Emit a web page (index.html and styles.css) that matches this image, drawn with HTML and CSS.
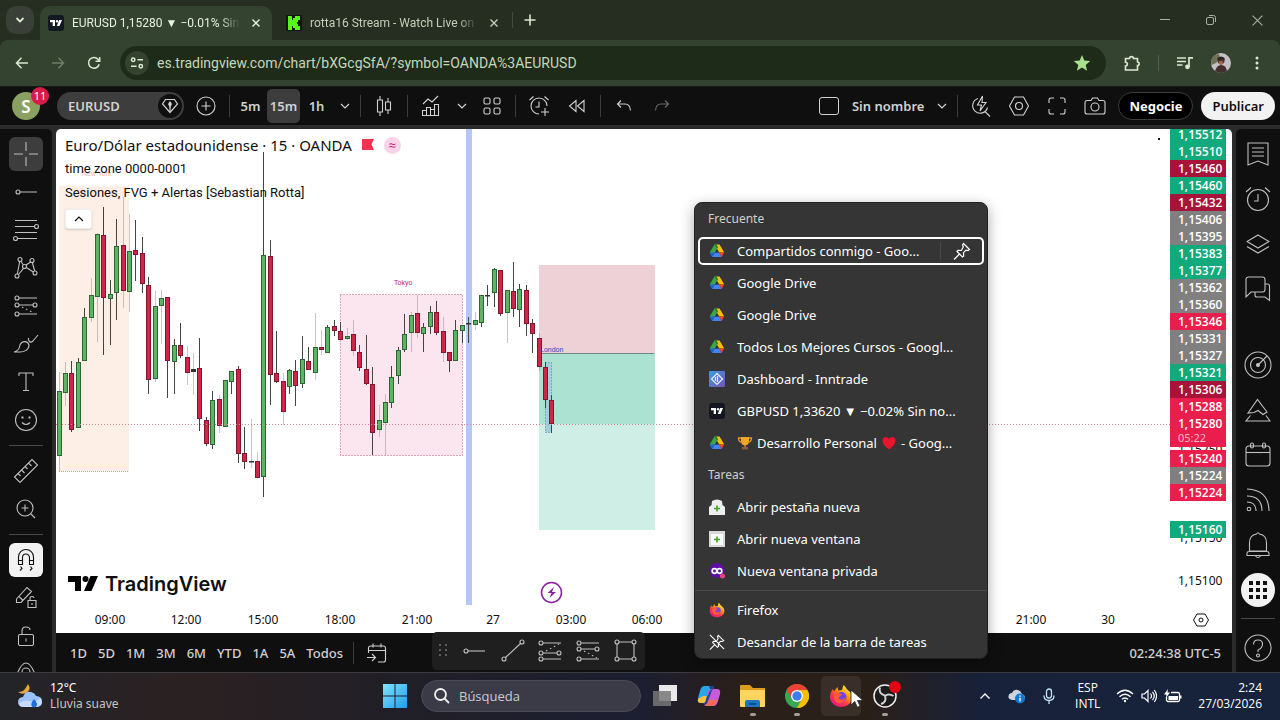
FILE: index.html
```html
<!DOCTYPE html>
<html lang="es">
<head>
    <meta charset="UTF-8">
    <meta name="viewport" content="width=device-width, initial-scale=1.0">
    <title>EURUSD 1,15280 ▼ −0.01% Sin nombre</title>
    <link rel="stylesheet" href="styles.css">
</head>
<body>
    <!-- Shared icons -->
    <svg class="sprite" aria-hidden="true">
        <symbol id="drive" viewBox="0 0 16 16">
            <path d="M5.4 1.5h5.2L8 6z" fill="#188038"/>
            <path d="M5.4 1.5L0.8 9.6 3.3 14 8 6z" fill="#34a853"/>
            <path d="M10.6 1.5L15.2 9.6H10L8 6 5.6 1.8z" fill="#fbbc04"/>
            <path d="M5.4 1.5h2L9 4.3 8 6z" fill="#188038"/>
            <path d="M0.8 9.6H6L3.3 14z" fill="#1967d2"/>
            <path d="M6 9.6h4L12.7 14H3.3z" fill="#4285f4"/>
            <path d="M10 9.6h5.2L12.7 14z" fill="#ea4335"/>
            <path d="M8 6l2 3.6H6z" fill="#353535"/>
        </symbol>
        <symbol id="tv" viewBox="0 0 16 16">
            <rect width="16" height="16" rx="3" fill="#131722"/>
            <path d="M2 5h5v6H4.7V7.3H2zM11.2 5H14l-2.5 6H8.8z" fill="#fff"/>
            <circle cx="9" cy="6.2" r="1.2" fill="#fff"/>
        </symbol>
        <symbol id="firefox" viewBox="0 0 24 24">
            <defs>
                <linearGradient id="ffBody" x1="0.85" y1="0.1" x2="0.2" y2="0.95">
                    <stop offset="0" stop-color="#fff44f"/>
                    <stop offset="0.35" stop-color="#ff980e"/>
                    <stop offset="0.65" stop-color="#ff3647"/>
                    <stop offset="1" stop-color="#e31587"/>
                </linearGradient>
            </defs>
            <path d="M4 5l1 2.5L8.5 3l.8 3.5L13 6l1.5-5c2 1.5 2.5 3.5 4 4.8C21.5 8 23 10.5 23 13.5 23 19 18 23 12 23S1 18.5 1 13c0-3 1-6 3-8z" fill="url(#ffBody)"/>
            <circle cx="12.5" cy="13" r="5" fill="#7543e3"/>
            <path d="M5 10c3-2 5-1 8 .5-1 2-3 1.5-3.5 3.5 1.5 2.5 5 2 7-1-.5 5-4 7-7.5 6S4.5 14 5 10z" fill="#ff5a36"/>
        </symbol>
        <symbol id="chevron" viewBox="0 0 12 12"><path d="M2 4l4 4 4-4" fill="none" stroke="currentColor" stroke-width="1.2"/></symbol>
        <symbol id="close" viewBox="0 0 10 10"><path d="M1.5 1.5l7 7M8.5 1.5l-7 7" fill="none" stroke="currentColor" stroke-width="1.4"/></symbol>
    </svg>

    <header class="browser">
        <div class="tab-strip">
            <button class="tab-search" aria-label="Buscar pestañas"><svg width="12" height="12" viewBox="0 0 12 12"><path d="M2.5 4L6 7.5 9.5 4" fill="none" stroke="currentColor" stroke-width="1.8"/></svg></button>
            <div class="tab tab-active">
                <svg width="16" height="16"><use href="#tv"/></svg>
                <span class="tab-title">EURUSD 1,15280 ▼ −0.01% Sin</span>
                <button class="tab-close" aria-label="Cerrar"><svg width="10" height="10"><use href="#close"/></svg></button>
            </div>
            <div class="tab tab-wide">
                <svg width="16" height="16" viewBox="0 0 16 16"><rect width="16" height="16" fill="#0a1a06"/><path d="M2 1h4v4h1V3h2V1h5v4h-2v2h-1v2h1v2h2v4H9v-2H7v-2H6v4H2z" fill="#53fc18"/></svg>
                <span class="tab-title">rotta16 Stream - Watch Live on</span>
                <button class="tab-close" aria-label="Cerrar"><svg width="10" height="10"><use href="#close"/></svg></button>
            </div>
            <span class="tab-line"></span>
            <button class="new-tab" aria-label="Nueva pestaña"><svg width="14" height="14" viewBox="0 0 14 14"><path d="M7 1.5v11M1.5 7h11" stroke="currentColor" stroke-width="1.6"/></svg></button>
            <div class="window-controls">
                <button aria-label="Minimizar"><svg width="10" height="10" viewBox="0 0 10 10"><path d="M0 4.5h10" stroke="currentColor"/></svg></button>
                <button aria-label="Restaurar"><svg width="10" height="10" viewBox="0 0 10 10"><rect x=".5" y="2.5" width="7" height="7" rx="1.5" fill="none" stroke="currentColor"/><path d="M3 .5h4.5a2 2 0 0 1 2 2V7" fill="none" stroke="currentColor"/></svg></button>
                <button aria-label="Cerrar ventana"><svg width="11" height="11" viewBox="0 0 10 10"><path d="M.5.5l9 9M9.5.5l-9 9" stroke="currentColor"/></svg></button>
            </div>
        </div>

        <div class="nav-bar">
            <button class="nav-btn" aria-label="Atrás"><svg width="14" height="14" viewBox="0 0 14 14"><path d="M13 7H1.5M6.5 1.8L1.5 7l5 5.2" fill="none" stroke="currentColor" stroke-width="1.5"/></svg></button>
            <button class="nav-btn nav-off" aria-label="Adelante"><svg width="14" height="14" viewBox="0 0 14 14"><path d="M1 7h11.5M7.5 1.8l5 5.2-5 5.2" fill="none" stroke="currentColor" stroke-width="1.5"/></svg></button>
            <button class="nav-btn" aria-label="Recargar"><svg width="14" height="14" viewBox="0 0 14 14"><path d="M12.2 8.2A5.4 5.4 0 1 1 11 3.2L12.5 5M12.7 1v4.2H8.5" fill="none" stroke="currentColor" stroke-width="1.5"/></svg></button>
            <div class="url-bar">
                <button class="site-info" aria-label="Información del sitio"><svg width="14" height="14" viewBox="0 0 14 14"><g fill="none" stroke="currentColor" stroke-width="1.5"><circle cx="3.2" cy="3.8" r="1.7"/><path d="M7.5 3.8H13M1 10.2h5.5"/><circle cx="10.8" cy="10.2" r="1.7"/></g></svg></button>
                <input class="url" type="text" aria-label="Dirección" value="es.tradingview.com/chart/bXGcgSfA/?symbol=OANDA%3AEURUSD">
                <svg width="18" height="18" viewBox="0 0 18 18"><path d="M9 1l2.3 5.5 5.9.5-4.5 3.9 1.4 5.8L9 13.6l-5.1 3.1 1.4-5.8L.8 7l5.9-.5z" fill="#a9e08f"/></svg>
            </div>
            <button class="nav-btn" aria-label="Extensiones"><svg width="18" height="18" viewBox="0 0 18 18"><path d="M2.5 4.5H6.5C6.5 2 10.5 2 10.5 4.5H14.5V8c2.2 0 2.2 3.5 0 3.5V16H2.5V12c2.5 0 2.5-3.8 0-3.8z" fill="none" stroke="currentColor" stroke-width="1.6"/></svg></button>
            <span class="nav-line"></span>
            <button class="nav-btn" aria-label="Contenido multimedia"><svg width="16" height="14" viewBox="0 0 16 14"><path d="M0 2h9M0 5.5h9M0 9h5.5M12 10.5V1.8h4" fill="none" stroke="currentColor" stroke-width="1.7"/><circle cx="10.5" cy="10.8" r="2.4" fill="currentColor"/></svg></button>
            <button class="nav-btn" aria-label="Perfil"><svg width="20" height="20" viewBox="0 0 20 20"><circle cx="10" cy="10" r="10" fill="#c5bfc6"/><path d="M1 5q3-4 7-4l1 4-4 5-4.5 2Q-.5 8 1 5z" fill="#6e7256"/><circle cx="10" cy="7.5" r="3.6" fill="#54352e"/><path d="M6.5 5q3.5-3 7 0v2h-7z" fill="#2b2524"/><path d="M4 18q2-6 6-6 5 0 6 6-6 4-12 0z" fill="#41302c"/><circle cx="10" cy="10" r="2" fill="#a66b56"/></svg></button>
            <button class="nav-btn" aria-label="Menú"><svg width="4" height="16" viewBox="0 0 4 16" fill="currentColor"><circle cx="2" cy="3" r="1.5"/><circle cx="2" cy="8" r="1.5"/><circle cx="2" cy="13" r="1.5"/></svg></button>
        </div>
    </header>

    <div class="topbar">
        <button class="account">S<span class="badge">11</span></button>
        <div class="symbol">
            <button class="symbol-name">EURUSD</button>
            <button class="symbol-gem" aria-label="Liquidez"><svg width="18" height="18" viewBox="0 0 18 18" fill="none" stroke="currentColor" stroke-width="1.2"><path d="M4.5 2.5h9L16.5 7 9 15.5 1.5 7z"/><path d="M9 4l2 3-2 4-2-4z" fill="currentColor" stroke="none"/><path d="M9 9v6"/></svg></button>
        </div>
        <button class="tool" aria-label="Comparar"><svg width="20" height="20" viewBox="0 0 20 20" class="line"><circle cx="10" cy="10" r="9"/><path d="M10 5.5v9M5.5 10h9"/></svg></button>
        <span class="divider"></span>
        <button class="interval">5m</button>
        <button class="interval interval-on">15m</button>
        <button class="interval">1h</button>
        <button class="more" aria-label="Más intervalos"><svg width="12" height="12"><use href="#chevron"/></svg></button>
        <span class="divider"></span>
        <button class="tool" aria-label="Velas"><svg width="18" height="22" viewBox="0 0 18 22" class="line"><path d="M5 1v4M5 17v4M2.5 5h5v12h-5zM13 3v4M13 15v4M10.5 7h5v8h-5z"/></svg></button>
        <span class="divider"></span>
        <button class="tool" aria-label="Indicadores"><svg width="20" height="22" viewBox="0 0 20 22" class="line"><path d="M2 9l5-5 4 3 6-6M1.5 20.5v-5h4v5zM5.5 20.5v-8h4v8M9.5 20.5v-6h4v6M13.5 20.5v-11h4v11h-12"/></svg></button>
        <button class="more" aria-label="Favoritos"><svg width="12" height="12"><use href="#chevron"/></svg></button>
        <button class="tool" aria-label="Plantillas"><svg width="18" height="18" viewBox="0 0 18 18" class="line"><rect x="1" y="1" width="6" height="6" rx="1.5"/><rect x="11" y="1" width="6" height="6" rx="1.5"/><rect x="1" y="11" width="6" height="6" rx="1.5"/><rect x="11" y="11" width="6" height="6" rx="1.5"/></svg></button>
        <span class="divider"></span>
        <button class="tool" aria-label="Crear alerta"><svg width="22" height="22" viewBox="0 0 22 22" class="line"><path d="M19 11a8 8 0 1 0-8 8M11 6.5V12H7.5M1.5 5l4-3.5M16.5 1.5l4 3.5M17 13v8M13 17h8"/></svg></button>
        <button class="tool" aria-label="Repetición"><svg width="18" height="14" viewBox="0 0 18 14" class="line"><path d="M8 1.5v11L1.5 7zM16 1.5v11L9.5 7z"/></svg></button>
        <span class="divider"></span>
        <button class="tool" aria-label="Deshacer"><svg width="16" height="14" viewBox="0 0 16 14" class="line"><path d="M5 1.5L1.5 5 5 8.5M1.5 5H9q5 0 5.5 6.5"/></svg></button>
        <button class="tool tool-off" aria-label="Rehacer"><svg width="16" height="14" viewBox="0 0 16 14" class="line"><path d="M11 1.5L14.5 5 11 8.5M14.5 5H7q-5 0-5.5 6.5"/></svg></button>
        <div class="topbar-right">
            <label class="layout-name"><input type="checkbox"> Sin nombre</label>
            <button class="more" aria-label="Gestionar diseños"><svg width="12" height="12"><use href="#chevron"/></svg></button>
            <span class="divider"></span>
            <button class="tool" aria-label="Búsqueda rápida"><svg width="22" height="22" viewBox="0 0 22 22" class="line"><path d="M8 3.5a7.5 7.5 0 1 0 9.5 9M15 16.5l5 5M12.5 1L7.5 10h4l-1.5 6 6-8.5h-4z"/></svg></button>
            <button class="tool" aria-label="Ajustes"><svg width="22" height="20" viewBox="0 0 22 20" class="line"><path d="M6.5 1h9l5 9-5 9h-9l-5-9z"/><circle cx="11" cy="10" r="3.5"/></svg></button>
            <button class="tool" aria-label="Pantalla completa"><svg width="18" height="18" viewBox="0 0 18 18" class="line"><path d="M1 6V3a2 2 0 0 1 2-2h3M12 1h3a2 2 0 0 1 2 2v3M17 12v3a2 2 0 0 1-2 2h-3M6 17H3a2 2 0 0 1-2-2v-3"/></svg></button>
            <button class="tool" aria-label="Captura"><svg width="22" height="18" viewBox="0 0 22 18" class="line"><path d="M3 3.5h4L8.5 1h5L15 3.5h4a2 2 0 0 1 2 2V15a2 2 0 0 1-2 2H3a2 2 0 0 1-2-2V5.5a2 2 0 0 1 2-2z"/><circle cx="11" cy="10" r="4"/></svg></button>
            <button class="pill pill-dark">Negocie</button>
            <button class="pill">Publicar</button>
        </div>
    </div>

    <div class="workspace">
        <nav class="rail rail-left">
            <button class="rail-btn rail-hover" aria-label="Cruz"><svg width="24" height="24" viewBox="0 0 24 24" class="line"><path d="M12 0v9M12 15v9M0 12h9M15 12h9"/></svg></button>
            <button class="rail-btn" aria-label="Rayo horizontal"><svg width="22" height="6" viewBox="0 0 22 6" class="line"><circle cx="3" cy="3" r="2"/><path d="M5 3h17"/></svg></button>
            <button class="rail-btn" aria-label="Fibonacci"><svg width="26" height="24" viewBox="0 0 26 24" class="line"><path d="M2 2.5h22M2 8.5h19.5M2 14.5h22M4.5 20.5H24"/><circle cx="23.5" cy="8.5" r="2"/><circle cx="2.5" cy="20.5" r="2"/></svg></button>
            <button class="rail-btn" aria-label="Patrones"><svg width="24" height="24" viewBox="0 0 24 24" class="line"><circle cx="6" cy="3.5" r="2"/><circle cx="18" cy="4.5" r="2"/><circle cx="10.5" cy="10.5" r="2"/><circle cx="3" cy="20" r="2"/><circle cx="21" cy="17" r="2"/><path d="M5.7 5.5L3.3 18M6.8 5.3L9.5 9M12 9l4.7-3M18.3 6.5l2.4 8.5M9.5 12.3L4.5 18.5M12.3 11.5l7 4.5"/></svg></button>
            <button class="rail-btn" aria-label="Previsión"><svg width="24" height="22" viewBox="0 0 24 22" class="line"><circle cx="3" cy="3" r="2"/><circle cx="3" cy="10" r="2"/><circle cx="21" cy="10" r="2"/><circle cx="3" cy="19" r="2"/><path d="M5 3h18M5 10h14M5 19h18"/><path d="M8 12l12 6" stroke-dasharray="1.5 3"/></svg></button>
            <button class="rail-btn" aria-label="Pincel"><svg width="26" height="20" viewBox="0 0 26 20" class="line"><path d="M1 18q5-1 6-7c2-5 8-4 9 0 0 5-5 7-9 7zM25 1l-5 6q-2 2-3.5.5T15.5 4"/></svg></button>
            <button class="rail-btn" aria-label="Texto"><svg width="16" height="20" viewBox="0 0 16 20" class="line"><path d="M1 4V1h14v3M8 1v17M5 18.5h6"/></svg></button>
            <button class="rail-btn" aria-label="Iconos"><svg width="24" height="24" viewBox="0 0 24 24" class="line"><circle cx="12" cy="12" r="10.5"/><path d="M8 14.5q4 4 8 0"/><path d="M8.5 8.5v2M15.5 8.5v2" stroke-width="2"/></svg></button>
            <span class="rail-line"></span>
            <button class="rail-btn" aria-label="Medir"><svg width="26" height="26" viewBox="0 0 26 26" class="line"><path d="M1.5 19L19 1.5l5.5 5.5L7 24.5zM5 15.5l2.5 2.5M8.5 12l3 3M12 8.5l2.5 2.5M15.5 5l3 3"/></svg></button>
            <button class="rail-btn" aria-label="Zoom"><svg width="20" height="20" viewBox="0 0 20 20" class="line"><circle cx="9" cy="9" r="8"/><path d="M15 15l4 4M9 5.5v7M5.5 9h7"/></svg></button>
            <span class="rail-line"></span>
            <button class="rail-btn rail-on" aria-label="Imán"><svg width="18" height="24" viewBox="0 0 18 24" class="line"><path d="M1.5 16.5V9a7.5 7.5 0 0 1 15 0v7.5h-4V9.5a3.5 3.5 0 0 0-7 0v7zM1.5 12.5h4M12.5 12.5h4M3.5 18.5l1.5 2-2 2M13.5 18.5l1.5 2-2 2"/></svg></button>
            <button class="rail-btn" aria-label="Seguir dibujando"><svg width="22" height="24" viewBox="0 0 22 24" class="line"><path d="M1.5 13L12 1.5l4.5 4L6 16.5H1.5zM4 10.5l4 4M13 14.5h8v7h-8zM15 14.5v-2q0-2 2-2t2 1.5M17 17v2"/></svg></button>
            <button class="rail-btn" aria-label="Bloquear"><svg width="18" height="20" viewBox="0 0 18 20" class="line"><rect x="1.5" y="8.5" width="15" height="11" rx="1.5"/><path d="M5 8.5V5q0-4 4-4t4 3M9 12.5v3"/></svg></button>
            <button class="rail-btn" aria-label="Ocultar"><svg width="20" height="24" viewBox="0 0 20 24" class="line"><path d="M1 12q9-22 18 0-9 22-18 0z"/><circle cx="10" cy="10" r="4"/></svg></button>
        </nav>

        <main class="center">
            <section class="chart">
                <svg class="plot" id="plot" role="img" aria-label="Gráfico de velas EURUSD 15 minutos"></svg>
                <svg class="scale" id="scale" role="img" aria-label="Escala de precios"></svg>
                <div class="legend">
                    <div class="legend-title">Euro/Dólar estadounidense · 15 · OANDA
                        <svg width="12" height="12" viewBox="0 0 12 12"><path d="M0 0h12L9.5 5.5 12 11H0z" fill="#f7334f"/></svg>
                        <span class="approx">≈</span>
                    </div>
                    <div class="legend-study">time zone 0000-0001</div>
                    <div class="legend-study">Sesiones, FVG + Alertas [Sebastian Rotta]</div>
                    <button class="collapse" aria-label="Contraer"><svg width="10" height="10" viewBox="0 0 10 10"><path d="M1 7l4-4 4 4" fill="none" stroke="currentColor" stroke-width="1.2"/></svg></button>
                </div>
                <a class="brand" href="#">
                    <svg width="30" height="16" viewBox="0 0 30 16"><path d="M0 0h13v15H7V6H0zM22.5 0H30l-6.5 15H16z"/><circle cx="17.5" cy="3" r="3"/></svg>
                    <span>TradingView</span>
                </a>
            </section>

            <footer class="ranges">
                <button>1D</button>
                <button>5D</button>
                <button>1M</button>
                <button>3M</button>
                <button>6M</button>
                <button>YTD</button>
                <button>1A</button>
                <button>5A</button>
                <button>Todos</button>
                <span class="divider"></span>
                <button class="goto" aria-label="Ir a"><svg width="20" height="20" viewBox="0 0 20 20" class="line"><path d="M1.5 10V5a2 2 0 0 1 2-2h13a2 2 0 0 1 2 2v12a2 2 0 0 1-2 2H11M1.5 7.5h17M6 .5v4M14 .5v4M0 14.5h8M5 11l3.5 3.5L5 18"/></svg></button>
                <span class="clock">02:24:38 UTC-5</span>
            </footer>

            <div class="favorites">
                <svg width="10" height="14" viewBox="0 0 10 14" fill="#5d5d5d"><path d="M0 0h2v2H0zM6 0h2v2H6zM0 5h2v2H0zM6 5h2v2H6zM0 10h2v2H0zM6 10h2v2H6z"/></svg>
                <button aria-label="Rayo horizontal"><svg width="24" height="24" viewBox="0 0 24 24" class="line"><circle cx="3" cy="12" r="2"/><path d="M5 12h17"/></svg></button>
                <button aria-label="Línea de tendencia"><svg width="24" height="24" viewBox="0 0 24 24" class="line"><circle cx="3" cy="20" r="2"/><circle cx="21" cy="3" r="2"/><path d="M4.5 18.5l15-14"/></svg></button>
                <button aria-label="Posición larga"><svg width="24" height="24" viewBox="0 0 24 24" class="line"><circle cx="3" cy="4" r="2"/><circle cx="3" cy="14" r="2"/><circle cx="21" cy="14" r="2"/><circle cx="3" cy="20" r="2"/><path d="M5 4h18M5 14h14M5 20h18"/><path d="M8 12l13-7" stroke-dasharray="1.5 3"/></svg></button>
                <button aria-label="Posición corta"><svg width="24" height="24" viewBox="0 0 24 24" class="line"><circle cx="3" cy="4" r="2"/><circle cx="3" cy="10" r="2"/><circle cx="21" cy="10" r="2"/><circle cx="3" cy="20" r="2"/><path d="M5 4h18M5 10h14M5 20h18"/><path d="M8 12l13 7" stroke-dasharray="1.5 3"/></svg></button>
                <button aria-label="Rectángulo"><svg width="24" height="24" viewBox="0 0 24 24" class="line"><circle cx="3" cy="3" r="2"/><circle cx="20" cy="3" r="2"/><circle cx="3" cy="20" r="2"/><circle cx="20" cy="20" r="2"/><path d="M5 3h13M5 20h13M3 5v13M20 5v13"/></svg></button>
            </div>
        </main>

        <nav class="rail rail-right">
            <button class="side-btn" aria-label="Lista"><svg width="22" height="24" viewBox="0 0 22 24" class="line"><path d="M1 1h20v22l-10-4-10 4zM5 6h12M5 10h12M5 14h12"/></svg></button>
            <button class="side-btn" aria-label="Alertas"><svg width="26" height="26" viewBox="0 0 26 26" class="line"><circle cx="13" cy="14" r="10.5"/><path d="M13 8v7H9M1 6l5-4.5M20 1.5L25 6"/></svg></button>
            <button class="side-btn" aria-label="Capas"><svg width="24" height="20" viewBox="0 0 24 20" class="line"><path d="M12 1l11 6.5L12 14 1 7.5zM1 12.5L12 19l11-6.5"/></svg></button>
            <button class="side-btn" aria-label="Chats"><svg width="26" height="26" viewBox="0 0 26 26" class="line"><path d="M1 21V3.5a2.5 2.5 0 0 1 2.5-2.5h14A2.5 2.5 0 0 1 20 3.5v10a2.5 2.5 0 0 1-2.5 2.5H6zM20 8h2.5a2 2 0 0 1 2 2v14.5L20 21h-8a2 2 0 0 1-2-2v-3"/></svg></button>
            <span class="side-space"></span>
            <button class="side-btn" aria-label="Screener"><svg width="28" height="28" viewBox="0 0 28 28" class="line"><circle cx="14" cy="14" r="13"/><circle cx="14" cy="14" r="7.5"/><circle cx="14" cy="14" r="1.5" fill="currentColor"/><path d="M14 14l9-9"/></svg></button>
            <button class="side-btn" aria-label="Pine"><svg width="26" height="24" viewBox="0 0 26 24" class="line"><path d="M3 15L12.5 1.5 22 14l-4 2.5-5-4-4 2zM5.5 17.5L1 23h24l-4-5.5"/></svg></button>
            <button class="side-btn" aria-label="Calendario"><svg width="26" height="26" viewBox="0 0 26 26" class="line"><rect x="1" y="4" width="24" height="20" rx="3"/><path d="M1 10.5h24"/><rect x="5.5" y="1" width="3" height="5" rx="1.5"/><rect x="17.5" y="1" width="3" height="5" rx="1.5"/></svg></button>
            <button class="side-btn" aria-label="Noticias"><svg width="24" height="24" viewBox="0 0 24 24" class="line"><circle cx="3" cy="21" r="1.8"/><path d="M1 14q9 0 9 9M1 8q15 0 15 15M1 1q22 1 22 22"/></svg></button>
            <button class="side-btn" aria-label="Notificaciones"><svg width="24" height="28" viewBox="0 0 24 28" class="line"><path d="M3.5 20v-8q0-8 7-9 1.5-2.5 3 0 7 1 7 9v8zM3 20.5h18q2.5 0 2 4H1q-.5-4 2-4M9.5 25q2.5 3 5 0"/></svg></button>
            <button class="side-btn" aria-label="Productos"><svg width="34" height="34" viewBox="0 0 34 34"><circle cx="17" cy="17" r="17" fill="#f2f2f2"/><path d="M8 8h4v4H8zM15 8h4v4h-4zM22 8h4v4h-4zM8 15h4v4H8zM15 15h4v4h-4zM22 15h4v4h-4zM8 22h4v4H8zM15 22h4v4h-4zM22 22h4v4h-4z" fill="#111"/></svg></button>
            <span class="rail-line"></span>
            <button class="side-btn" aria-label="Ayuda"><svg width="28" height="28" viewBox="0 0 28 28" class="line"><circle cx="14" cy="14" r="13"/><path d="M9.5 10.5q0-4.5 4.5-4.5t4.5 4-4.5 6V18"/><circle cx="14" cy="21.5" r="1.5"/></svg></button>
        </nav>
    </div>

    <!-- Jump list opened over the Firefox button -->
    <div class="jump-list">
        <h2>Frecuente</h2>
        <button class="jump-item jump-focus">
            <svg width="16" height="16"><use href="#drive"/></svg><span>Compartidos conmigo - Goo...</span>
            <svg width="18" height="18" viewBox="0 0 18 18" fill="none" stroke="currentColor" stroke-width="1.2"><path d="M10.5 1.5l6 6-1.5 1-2-.3-2.5 2.5.2 3.3-1.2 1L4 9.5l1-1.2 3.3.2L10.3 5l-.8-2zM6.5 12L1 17.5"/></svg>
        </button>
        <button class="jump-item"><svg width="16" height="16"><use href="#drive"/></svg><span>Google Drive</span></button>
        <button class="jump-item"><svg width="16" height="16"><use href="#drive"/></svg><span>Google Drive</span></button>
        <button class="jump-item"><svg width="16" height="16"><use href="#drive"/></svg><span>Todos Los Mejores Cursos - Googl...</span></button>
        <button class="jump-item">
            <svg width="16" height="16" viewBox="0 0 16 16"><defs><linearGradient id="inn" x2="1" y2="1"><stop offset="0" stop-color="#3a9be0"/><stop offset="1" stop-color="#7454b8"/></linearGradient></defs><rect width="16" height="16" rx="1" fill="url(#inn)"/><path d="M8 2.5L13.5 8 8 13.5 2.5 8zM6.5 6v4M8.5 5v6" fill="none" stroke="#e4f2ff" stroke-width="1.2"/></svg>
            <span>Dashboard - Inntrade</span>
        </button>
        <button class="jump-item"><svg width="16" height="16"><use href="#tv"/></svg><span>GBPUSD 1,33620 ▼ −0.02% Sin no...</span></button>
        <button class="jump-item">
            <svg width="16" height="16"><use href="#drive"/></svg>
            <span class="jump-rich">
                <svg width="16" height="14" viewBox="0 0 16 14"><path d="M4 1h8v4q0 4-4 4.5Q4 9 4 5z" fill="#f5a623"/><path d="M4 2H1.5q0 4 3.5 4M12 2h2.5q0 4-3.5 4M8 9v2" fill="none" stroke="#e2952b" stroke-width="1.3"/><path d="M5 11h6v2.5H5z" fill="#8a5a34"/></svg>
                Desarrollo Personal
                <svg width="16" height="14" viewBox="1 0 16 14"><path d="M9 13.5Q2.5 9 2.5 4.5 2.5 1 5.8 1 8 1 9 3q1-2 3.2-2 3.3 0 3.3 3.5Q15.5 9 9 13.5z" fill="#e8152c"/></svg>
                - Goog...
            </span>
        </button>
        <h2>Tareas</h2>
        <button class="jump-item"><svg width="16" height="16" viewBox="0 0 16 16"><path d="M3 2q5-3 10 0l.5 4L16 8v8H0V8l2.5-2z" fill="#eee"/><path d="M8 6.5v6M5 9.5h6" stroke="#42a32c" stroke-width="1.6"/></svg><span>Abrir pestaña nueva</span></button>
        <button class="jump-item"><svg width="16" height="16" viewBox="0 0 16 16"><path d="M0 0h16v16H0z" fill="#d9d9d9"/><path d="M2 3h12v11H2z" fill="#f8f8f8"/><path d="M8 5.5v6M5 8.5h6" stroke="#42a32c" stroke-width="1.6"/></svg><span>Abrir nueva ventana</span></button>
        <button class="jump-item"><svg width="16" height="16" viewBox="0 0 16 16"><circle cx="8" cy="7.5" r="7.5" fill="#5b0fa8"/><circle cx="5.5" cy="8" r="2.3" fill="none" stroke="#fff" stroke-width="1.7"/><circle cx="10.5" cy="8" r="2.3" fill="none" stroke="#fff" stroke-width="1.7"/><circle cx="13.5" cy="13" r="2.5" fill="#e3457c"/></svg><span>Nueva ventana privada</span></button>
        <hr>
        <button class="jump-item"><svg width="16" height="16"><use href="#firefox"/></svg><span>Firefox</span></button>
        <button class="jump-item"><svg width="16" height="18" viewBox="0 0 18 18" fill="none" stroke="currentColor" stroke-width="1.2"><path d="M10.5 1.5l6 6-1.5 1-2-.3-2.5 2.5.2 3.3-1.2 1L4 9.5l1-1.2 3.3.2L10.3 5l-.8-2zM6.5 12L1 17.5M1 1l16 16"/></svg><span>Desanclar de la barra de tareas</span></button>
    </div>

    <div class="taskbar">
        <button class="weather">
            <svg width="28" height="26" viewBox="0 0 28 26"><path d="M12 1q4 6-2 9-4 2-8-1 5 0 7-3 1.5-2 3-5z" fill="#e9a83a"/><path d="M7 24q-5-.5-5-5t5-5q2-6 8-5 4 1 5 4 6 0 6 6 0 4.5-5 5z" fill="#9cc0fb"/><path d="M3 21q3-4 10-3t12-3q3 7-4 9H7q-3 0-4-3z" fill="#c5dbff"/><path d="M18 16q-5 6-1 8.5 4 0 4-3.5-.5-3-3-5z" fill="#1b6fe0"/></svg>
            <span class="stack"><span>12°C</span><span class="dim">Lluvia suave</span></span>
        </button>
        <div class="apps">
            <button class="app" aria-label="Inicio"><svg width="24" height="24" viewBox="0 0 24 24"><defs><linearGradient id="win" x2="1" y2="1"><stop offset="0" stop-color="#7fe3fb"/><stop offset="1" stop-color="#1f9df0"/></linearGradient></defs><path d="M0 0h11.5v11.5H0zM12.5 0H24v11.5H12.5zM0 12.5h11.5V24H0zM12.5 12.5H24V24H12.5z" fill="url(#win)"/></svg></button>
            <div class="search">
                <svg width="16" height="16" viewBox="0 0 16 16" fill="none" stroke="#f0f0f0" stroke-width="1.8"><circle cx="6.5" cy="6.5" r="5.5"/><path d="M10.5 10.5l4.5 4.5"/></svg>
                <input type="search" placeholder="Búsqueda" aria-label="Búsqueda">
            </div>
            <button class="app" aria-label="Vista de tareas"><svg width="26" height="22" viewBox="0 0 26 22"><path d="M7 0h18v16H7z" fill="#e9e9e9"/><path d="M1 6h18v15H1z" fill="#777" fill-opacity=".85"/></svg></button>
            <button class="app" aria-label="Copilot"><svg width="24" height="24" viewBox="0 0 24 24"><path d="M8 2h7q2 0 1 3l-3 11q-1 3-4 3H4q-4 0-3-5l2-7q1-5 5-5z" fill="#2aa6e8"/><path d="M4 13q4-2 7 0l-2 6H4q-4 0-3-4z" fill="#f2c640"/><path d="M16 22H9q-2 0-1-3l3-11q1-3 4-3h5q4 0 3 5l-2 7q-1 5-5 5z" fill="#c85bdc"/><path d="M9 17q6-2 11-1-1 6-5 6H9q-2 0-1-3z" fill="#f46a5c"/><path d="M13 7q1-2 3-2h-3l-1-3h3q2 0 2 3-2 0-3 4l-3 8q-1 4-4 4l-1-2q3 0 3-4z" fill="#2c3f8c"/></svg></button>
            <button class="app app-run" aria-label="Explorador"><svg width="26" height="24" viewBox="0 0 26 24"><path d="M0 2q0-1 1-1h9l3 3h12v6H0z" fill="#dc9d1c"/><path d="M0 6h25v16q0 1-1 1H1q-1 0-1-1z" fill="#ffd560"/><path d="M5 23v-5q0-2 2-2h11q2 0 2 2v5z" fill="#1c76bd"/><path d="M9 20h7" stroke="#0d4d85" stroke-width="2"/></svg></button>
            <button class="app app-run" aria-label="Chrome"><svg width="24" height="24" viewBox="0 0 24 24"><circle cx="12" cy="12" r="12" fill="#34a853"/><path d="M1.6 6A12 12 0 0 1 22.4 6H12L7 15z" fill="#ea4335"/><path d="M22.4 6A12 12 0 0 1 12 24l5-9q2-5-3-9z" fill="#fbbc04"/><circle cx="12" cy="12" r="6" fill="#fff"/><circle cx="12" cy="12" r="4.7" fill="#3b7ded"/></svg></button>
            <button class="app app-hover" aria-label="Firefox"><svg width="24" height="24"><use href="#firefox"/></svg><svg class="cursor" width="14" height="20" viewBox="0 0 14 20"><path d="M1 1v15l3.8-3.5 2.5 5.7 2.7-1.2-2.5-5.5H13z" fill="#fff" stroke="#222" stroke-width=".8"/></svg></button>
            <button class="app app-run" aria-label="OBS"><svg width="24" height="24" viewBox="0 0 24 24"><circle cx="12" cy="12" r="11" fill="#1c1b1c" stroke="#eee" stroke-width="1.5"/><g fill="none" stroke="#d0d0d0" stroke-width="2"><path d="M7 3.5q-2 6 5 8"/><path d="M20.5 12q-5-3-8.5 0"/><path d="M8 20q6-2 4-8"/></g></svg><span class="rec"></span></button>
        </div>
        <div class="tray">
            <button class="tray-btn" aria-label="Iconos ocultos"><svg width="12" height="12" viewBox="0 0 12 12"><path d="M1.5 8.5L6 4l4.5 4.5" fill="none" stroke="#fff" stroke-width="1.4"/></svg></button>
            <button class="tray-btn" aria-label="OneDrive"><svg width="18" height="16" viewBox="0 0 18 16"><path d="M4 12q-4-1-3.5-4T4 5q2-4 6-3 3 1 4 4 3 1 3 4l-3 2z" fill="#ccd4de"/><circle cx="12" cy="10.5" r="5" fill="#1277cf"/><path d="M12 7.5v1.3M12 9.8v3.7" stroke="#fff" stroke-width="1.4"/></svg></button>
            <button class="tray-btn" aria-label="Micrófono"><svg width="12" height="16" viewBox="0 0 12 16" fill="none" stroke="#bfe3f2" stroke-width="1.3"><rect x="3.5" y="1" width="5" height="9" rx="2.5"/><path d="M1 7.5q0 5 5 5t5-5M6 12.5V16"/></svg></button>
            <span class="stack stack-mid"><span>ESP</span><span>INTL</span></span>
            <button class="status" aria-label="Red, sonido y batería">
                <svg width="18" height="14" viewBox="0 0 18 14" fill="none" stroke="#fff" stroke-width="1.4"><path d="M1 5q8-7.5 16 0M3.5 7.8q5.5-5 11 0M6 10.3q3-2.6 6 0"/><circle cx="9" cy="12" r="1.2" fill="#fff" stroke="none"/></svg>
                <svg width="16" height="14" viewBox="0 0 16 14" fill="none" stroke="#fff" stroke-width="1.2"><path d="M1 5h2.5L7 1.5v11L3.5 9H1zM9.5 4.5q2 2.5 0 5M11.5 2.8q3.5 4.2 0 8.4M13.3 1q4.5 6 0 12"/></svg>
                <svg width="18" height="14" viewBox="0 0 18 14"><path d="M7 3.5h7a1.5 1.5 0 0 1 1.5 1.5v6a1.5 1.5 0 0 1-1.5 1.5H4A1.5 1.5 0 0 1 2.5 11V8" fill="none" stroke="#fff" stroke-width="1.3"/><path d="M4.5 7H14v4H4.5zM16 6.5h1.5v3H16zM4 0L0 5.5h2.5L2 9l4-5.5H3.5z" fill="#fff"/></svg>
            </button>
            <button class="stack stack-end"><span>2:24</span><span>27/03/2026</span></button>
        </div>
    </div>

    <script src="chart.js"></script>
</body>
</html>
```

FILE: styles.css
```css
* {
    box-sizing: border-box;
}
body {
    margin: 0;
    height: 100vh;
    display: flex;
    flex-direction: column;
    overflow: hidden;
    background-color: #2b2b2b;
    color: #d1d1d1;
    font-family: "Noto Sans", "Open Sans", sans-serif;
    font-size: 13px;
}
button, input {
    font: inherit;
    color: inherit;
    background: none;
    border: none;
    padding: 0;
    margin: 0;
    outline: none;
}
button {
    display: flex;
    align-items: center;
    justify-content: center;
    cursor: pointer;
    white-space: nowrap;
}
svg {
    display: block;
    flex-shrink: 0;
}
.sprite {
    position: absolute;
    width: 0;
    height: 0;
}
.line {
    fill: none;
    stroke: currentColor;
    stroke-width: 1.1;
}

/* Browser */
.browser {
    background-color: #252e20;
    color: #dce8d2;
    border-bottom: 1px solid #171a16;
    font-family: Roboto, "Open Sans", sans-serif;
}
.tab-strip {
    display: flex;
    align-items: center;
    height: 40px;
    padding-left: 6px;
}
.tab-search {
    width: 28px;
    height: 28px;
    margin-right: 6px;
    border-radius: 10px;
    background-color: #3a4037;
}
.tab {
    display: flex;
    align-items: center;
    gap: 8px;
    width: 232px;
    height: 34px;
    padding: 0 8px;
    align-self: flex-end;
    border-radius: 10px 10px 0 0;
    color: #c3ceb9;
}
.tab-wide {
    width: 238px;
    padding-left: 14px;
}
.tab-active {
    background-color: #34432f;
    color: #e6f0de;
}
.tab-title {
    flex: 1;
    overflow: hidden;
    white-space: nowrap;
    font-size: 12px;
    mask-image: linear-gradient(90deg, #000 88%, transparent);
}
.tab-close {
    width: 16px;
    height: 16px;
}
.tab-line {
    width: 1px;
    height: 16px;
    margin: 0 3px 0 2px;
    background-color: #414a3c;
}
.new-tab {
    width: 28px;
    height: 28px;
}
.window-controls {
    display: flex;
    margin-left: auto;
    color: #a9b0a4;
}
.window-controls button {
    width: 46px;
    height: 40px;
}
.nav-bar {
    display: flex;
    align-items: center;
    height: 46px;
    padding: 0 5px 0 4px;
    background-color: #34432f;
    border-radius: 8px 8px 0 0;
}
.nav-btn {
    width: 36px;
    height: 34px;
}
.nav-off {
    color: #6f7d68;
}
.nav-line {
    width: 1px;
    height: 16px;
    margin: 0 8px;
    background-color: #53624d;
}
.url-bar {
    display: flex;
    align-items: center;
    flex: 1;
    height: 34px;
    margin: 0 8px;
    padding: 0 15px 0 5px;
    border-radius: 17px;
    background-color: #1d2b18;
}
.site-info {
    width: 24px;
    height: 24px;
    border-radius: 50%;
    background-color: #34432f;
}
.url {
    flex: 1;
    min-width: 0;
    padding: 0 8px;
    font-size: 14px;
    color: #c6d6bb;
}

/* Top toolbar */
.topbar {
    display: flex;
    align-items: center;
    height: 38px;
    padding: 0 5px 0 12px;
    margin-bottom: 4px;
    background-color: #0f0f0f;
    font-weight: 600;
}
.account {
    position: relative;
    width: 28px;
    height: 28px;
    margin-right: 17px;
    border-radius: 50%;
    background-color: #8aa162;
    color: #fff;
    font-size: 17px;
}
.badge {
    position: absolute;
    top: -5px;
    right: -9px;
    width: 18px;
    height: 18px;
    border-radius: 50%;
    background-color: #d81c48;
    font-size: 11px;
    font-weight: 400;
    line-height: 18px;
}
.symbol {
    display: flex;
    align-items: center;
    justify-content: space-between;
    width: 127px;
    height: 28px;
    margin-right: 3px;
    padding: 0 2px 0 11px;
    border-radius: 14px;
    background-color: #3d3d3d;
}
.symbol-gem {
    width: 24px;
    height: 24px;
    border-radius: 50%;
    background-color: #0f0f0f;
}
.tool {
    width: 38px;
    height: 34px;
}
.tool-off {
    color: #6a6a6a;
}
.more {
    width: 23px;
    height: 34px;
}
.interval {
    width: 33px;
    height: 34px;
    border-radius: 5px;
}
.interval-on {
    background-color: #3d3d3d;
}
.divider {
    width: 1px;
    height: 22px;
    margin: 0 4px;
    background-color: #3d3d3d;
}
.topbar-right {
    display: flex;
    align-items: center;
    margin-left: auto;
}
.layout-name {
    display: flex;
    align-items: center;
    gap: 13px;
    margin-right: 6px;
}
.layout-name input {
    appearance: none;
    width: 20px;
    height: 18px;
    border: 1px solid #d1d1d1;
    border-radius: 3px;
}
.pill {
    height: 28px;
    margin-left: 8px;
    padding: 0 11px;
    border-radius: 14px;
    background-color: #f2f2f2;
    color: #0f0f0f;
}
.pill-dark {
    margin-left: 4px;
    padding: 0 10px;
    border: 1px solid #3d3d3d;
    background-color: #000;
    color: #fff;
    font-weight: 700;
}

/* Workspace */
.workspace {
    display: flex;
    gap: 4px;
    flex: 1;
    min-height: 0;
}
.rail {
    display: flex;
    flex-direction: column;
    align-items: center;
    overflow: hidden;
    background-color: #0f0f0f;
    color: #c0c0c0;
}
.rail-left {
    width: 52px;
    padding-top: 6px;
    border-radius: 0 5px 0 0;
}
.rail-btn {
    width: 34px;
    height: 34px;
    margin: 2px 0;
    border-radius: 6px;
    flex-shrink: 0;
}
.rail-hover {
    background-color: #3d3d3d;
}
.rail-on {
    background-color: #f2f2f2;
    color: #0f0f0f;
}
.rail-line {
    width: 34px;
    height: 1px;
    margin: 6px 0;
    flex-shrink: 0;
    background-color: #4a4a4a;
}
.rail-right {
    width: 44px;
    padding-top: 2px;
    border-radius: 5px 0 0 0;
}
.side-btn {
    width: 44px;
    height: 45px;
    flex-shrink: 0;
}
.side-space {
    height: 31px;
    flex-shrink: 0;
}
.center {
    position: relative;
    display: flex;
    flex-direction: column;
    flex: 1;
    min-width: 0;
}
.chart {
    position: relative;
    display: flex;
    flex: 1;
    min-height: 0;
    overflow: hidden;
    border-radius: 5px 5px 0 0;
    background-color: #fff;
    color: #0f0f0f;
}
.plot {
    flex: 1;
    min-width: 0;
    height: 100%;
}
.scale {
    width: 62px;
    height: 100%;
}
.legend {
    position: absolute;
    top: 4px;
    left: 9px;
}
.legend-title {
    display: flex;
    align-items: center;
    gap: 10px;
    height: 24px;
    font-size: 15px;
    white-space: nowrap;
}
.legend-study {
    height: 24px;
    font-family: Roboto, "Open Sans", sans-serif;
    font-size: 13px;
    line-height: 24px;
    white-space: nowrap;
}
.approx {
    width: 17px;
    height: 17px;
    border-radius: 50%;
    background-color: #fbd3e8;
    color: #c2187a;
    font-size: 13px;
    line-height: 17px;
    text-align: center;
}
.collapse {
    width: 27px;
    height: 20px;
    margin-top: 4px;
    border: 1px solid #eee;
    border-radius: 3px;
    background-color: #fff;
    box-shadow: 0 1px 2px rgba(0, 0, 0, 0.15);
    color: #0f0f0f;
}
.brand {
    position: absolute;
    left: 12px;
    bottom: 35px;
    display: flex;
    align-items: center;
    gap: 7px;
    color: #0f0f0f;
    font-family: Inter, sans-serif;
    font-size: 20px;
    font-weight: 600;
    line-height: 28px;
    text-decoration: none;
}
.axis-text {
    font-size: 12px;
    text-anchor: middle;
    fill: #0f0f0f;
}
.price-text {
    font-size: 12px;
    fill: #0f0f0f;
}
.price-tag {
    font-family: "Open Sans", "Noto Sans", sans-serif;
    font-size: 12px;
    font-weight: 600;
    fill: #fff;
}
.countdown {
    font-size: 11px;
    fill: #f8b8c5;
}
.session-name {
    font-family: "Liberation Sans", Arial, sans-serif;
    font-size: 7px;
}
.ranges {
    display: flex;
    align-items: center;
    gap: 1px;
    height: 39px;
    padding: 0 11px 0 9px;
    background-color: #0f0f0f;
    font-size: 13px;
    font-weight: 500;
}
.ranges button {
    height: 28px;
    padding: 0 5px;
}
.ranges .goto {
    width: 36px;
}
.clock {
    margin-left: auto;
    white-space: nowrap;
}
.favorites {
    position: absolute;
    left: 376px;
    bottom: 2px;
    display: flex;
    align-items: center;
    width: 213px;
    height: 38px;
    padding-left: 7px;
    border-radius: 5px;
    background-color: #1f1f1f;
    color: #c0c0c0;
}
.favorites > svg {
    margin-right: 7px;
}
.favorites button {
    width: 38px;
    height: 34px;
}

/* Jump list */
.jump-list {
    position: absolute;
    left: 694px;
    bottom: 61px;
    display: flex;
    flex-direction: column;
    width: 294px;
    padding: 0 3px;
    border: 1px solid #222;
    border-radius: 8px;
    background-color: #353535;
    box-shadow: 0 4px 14px rgba(0, 0, 0, 0.35);
    color: #fff;
    font-size: 13px;
}
.jump-list h2 {
    margin: 0;
    height: 32px;
    padding-left: 10px;
    color: #d0d0d0;
    font-size: 12px;
    font-weight: 400;
    line-height: 32px;
}
.jump-list hr {
    width: 292px;
    margin: 3px -3px;
    border: none;
    border-top: 1px solid #4a4a4a;
}
.jump-item {
    justify-content: flex-start;
    gap: 12px;
    height: 28px;
    margin: 2px 0;
    padding: 0 11px 0 9px;
    border: 2px solid transparent;
    border-radius: 5px;
}
.jump-focus {
    border-color: #fff;
}
.jump-focus > span {
    flex: 1;
    border-right: 1px solid #484848;
    text-align: left;
}
.jump-rich {
    display: flex;
    align-items: center;
    gap: 4px;
}

/* Taskbar */
.taskbar {
    display: grid;
    grid-template-columns: 1fr auto 1fr;
    align-items: center;
    height: 48px;
    padding-bottom: 1px;
    border-top: 1px solid #3c3c40;
    background: linear-gradient(90deg, #232428 0, #2b2122 15%, #211f26 30%, #1c1e31 50%, #2a1f19 58%, #291f19 68%, #17213a 77%, #17223b 100%);
    color: #fff;
    font-size: 12px;
}
.weather {
    gap: 6px;
    justify-self: start;
    padding-left: 16px;
}
.stack {
    display: flex;
    flex-direction: column;
    align-items: flex-start;
    line-height: 16px;
}
.stack-mid {
    align-items: center;
}
.stack-end {
    align-items: flex-end;
}
.dim {
    color: #c4c4c4;
}
.apps {
    display: flex;
    align-items: center;
    gap: 4px;
}
.app {
    position: relative;
    width: 40px;
    height: 40px;
    border-radius: 5px;
}
.app-hover {
    background-color: #3a2e28;
}
.app-run::after {
    content: "";
    position: absolute;
    left: 17px;
    bottom: 0;
    width: 6px;
    height: 3px;
    border-radius: 2px;
    background-color: #a59d96;
}
.search {
    display: flex;
    align-items: center;
    gap: 9px;
    width: 220px;
    height: 32px;
    padding: 0 12px;
    margin-left: 2px;
    border: 1px solid #4b4b57;
    border-radius: 16px;
    background-color: #3b3a47;
}
.search input {
    width: 150px;
    font-family: "Open Sans", "Noto Sans", sans-serif;
    font-size: 13px;
}
.search input::placeholder {
    color: #cbcbd2;
}
.cursor {
    position: absolute;
    left: 29px;
    top: 13px;
}
.rec {
    position: absolute;
    top: 5px;
    right: 4px;
    width: 12px;
    height: 12px;
    border-radius: 50%;
    background-color: #e30613;
}
.tray {
    display: flex;
    align-items: center;
    justify-self: end;
    padding-right: 18px;
    font-family: "Open Sans", "Noto Sans", sans-serif;
}
.tray-btn {
    width: 32px;
    height: 40px;
}
.stack-mid {
    margin: 0 16px 0 10px;
}
.status {
    gap: 7px;
    margin-right: 16px;
}
```

FILE: chart.js
```js
const NS = 'http://www.w3.org/2000/svg';
const plot = document.getElementById('plot');
const scale = document.getElementById('scale');

function add(parent, tag, attrs, text) {
    const el = document.createElementNS(NS, tag);
    for (const key in attrs) el.setAttribute(key, attrs[key]);
    if (text) el.textContent = text;
    parent.appendChild(el);
}

// high, body top, body bottom, low, colour (g up, r down, k flat), 1 for a thin wick
const candles = [
    [243, 262, 327, 342, 'g', 1], [233, 244, 264, 277, 'g', 1], [232, 244, 301, 303, 'r'],
    [229, 233, 299, 299, 'g'], [179, 188, 232, 232, 'g'], [149, 166, 189, 193, 'g', 1],
    [104, 105, 168, 213, 'g', 1], [78, 106, 169, 226, 'r'], [151, 165, 170, 216, 'g'],
    [90, 117, 164, 191, 'g'], [68, 116, 162, 179, 'r', 1], [85, 122, 163, 183, 'g', 1],
    [91, 121, 126, 152, 'r'], [108, 124, 155, 164, 'r'], [148, 156, 251, 265, 'r'],
    [162, 177, 250, 253, 'g', 1], [161, 169, 177, 215, 'g', 1], [168, 168, 232, 269, 'r'],
    [210, 216, 233, 265, 'g'], [194, 216, 227, 229, 'r'], [217, 228, 244, 256, 'r', 1],
    [224, 240, 243, 266, 'k', 1], [209, 239, 290, 302, 'r'], [288, 291, 315, 317, 'r'],
    [262, 271, 316, 320, 'g'], [266, 270, 297, 304, 'r', 1], [251, 251, 298, 298, 'g'],
    [242, 242, 253, 265, 'g'], [237, 240, 325, 334, 'r'], [298, 324, 333, 340, 'r'],
    [290, 332, 333, 339, 'k', 1], [323, 332, 349, 349, 'r', 1], [23, 126, 348, 368, 'g'],
    [111, 127, 246, 276, 'r'], [202, 244, 253, 254, 'r'], [244, 252, 283, 296, 'r', 1],
    [240, 241, 258, 265, 'g'], [231, 242, 257, 277, 'r'], [207, 230, 255, 259, 'g'],
    [218, 232, 241, 241, 'r'], [184, 218, 244, 251, 'g', 1], [201, 218, 221, 226, 'r', 1],
    [196, 198, 224, 224, 'g'], [191, 197, 202, 207, 'r'], [193, 202, 211, 211, 'r'],
    [199, 207, 210, 211, 'g', 1], [191, 205, 222, 227, 'r', 1], [216, 223, 239, 242, 'r'],
    [206, 240, 255, 256, 'r'], [238, 255, 304, 326, 'r'], [276, 291, 301, 308, 'g', 1],
    [265, 273, 294, 326, 'g', 1], [237, 248, 274, 279, 'g'], [218, 221, 247, 255, 'g'],
    [185, 205, 221, 223, 'g'], [183, 186, 204, 223, 'g', 1], [166, 184, 204, 209, 'r', 1],
    [194, 198, 205, 223, 'g'], [177, 183, 198, 205, 'g'], [172, 183, 204, 206, 'r'],
    [188, 202, 224, 233, 'r', 1], [223, 223, 232, 243, 'r'], [191, 201, 232, 232, 'g'],
    [196, 196, 202, 214, 'g'], [188, 194, 195, 214, 'k'], [183, 191, 196, 201, 'g', 1],
    [166, 166, 194, 198, 'g'], [156, 166, 167, 177, 'k'], [139, 140, 164, 178, 'g'],
    [141, 141, 185, 187, 'r'], [161, 161, 184, 214, 'g', 1], [133, 162, 180, 188, 'r'],
    [155, 160, 181, 198, 'g'], [156, 161, 195, 207, 'r'], [190, 194, 205, 224, 'r'],
    [204, 209, 238, 242, 'r', 1], [233, 238, 271, 279, 'r'], [266, 271, 295, 304, 'r']
];
const fills = { g: '#5db563', r: '#cf2648', k: '#333' };
const borders = { g: '#2c6632', r: '#84142f', k: '#333' };

// Sessions and drawings
add(plot, 'text', { x: 26, y: 47, class: 'session-name', fill: '#f3b9a4' }, 'New York');
add(plot, 'rect', { x: 3, y: 57, width: 70, height: 285, fill: '#fdeee6' });
add(plot, 'path', { d: 'M3 342.5h70', stroke: '#e39a6c', 'stroke-dasharray': '1 1' });
add(plot, 'rect', { x: 284.5, y: 165.5, width: 122, height: 161, fill: '#fbe6f0', stroke: '#b5547c', 'stroke-dasharray': '1 2' });
add(plot, 'text', { x: 338, y: 156, class: 'session-name', fill: '#c2185b' }, 'Tokyo');
add(plot, 'rect', { x: 410, y: 0, width: 6, height: 476, fill: '#b5c7fa' });
add(plot, 'rect', { x: 483, y: 136, width: 116, height: 88, fill: '#eed1d7' });
add(plot, 'rect', { x: 483, y: 224, width: 116, height: 71, fill: '#abe2d1' });
add(plot, 'rect', { x: 483, y: 295, width: 116, height: 106, fill: '#cfeee5' });
add(plot, 'path', { d: 'M483 224.5h115', stroke: '#6b8a84' });
add(plot, 'rect', { x: 489.5, y: 233.5, width: 6, height: 70, fill: '#9fcfdd', stroke: '#4a7fb5', 'stroke-dasharray': '1 2' });

candles.forEach(function (c, i) {
    const x = Math.round(2.5 + i * 6.4);
    const [high, top, bottom, low, color, thin] = c;
    add(plot, 'path', { d: `M${x + 0.5} ${high}V${low}`, stroke: thin ? '#8a8080' : '#444', 'stroke-opacity': thin ? 0.45 : 1 });
    add(plot, 'rect', {
        x: x - 1.5, y: top + 0.5, width: 4, height: Math.max(bottom - top - 1, 0.5),
        fill: fills[color], stroke: borders[color], 'stroke-width': 1
    });
});

add(plot, 'text', { x: 484, y: 223, class: 'session-name', fill: '#2346c4' }, 'London');
add(plot, 'path', { d: 'M0 295.5h3000', stroke: '#c9868f', 'stroke-dasharray': '1 2' });
add(plot, 'rect', { x: 1102, y: 9, width: 2, height: 2, fill: '#111' });
add(plot, 'circle', { cx: 495.5, cy: 463.5, r: 10, fill: '#fff', stroke: '#8a1fa0', 'stroke-width': 1.5 });
add(plot, 'path', { d: 'M498 458l-6.5 6h4l-2 5 6.5-6h-4z', fill: '#8a1fa0' });

// Time axis
[[54, '09:00'], [130, '12:00'], [207, '15:00'], [284, '18:00'], [361, '21:00'], [437, '27'],
 [515, '03:00'], [591, '06:00'], [975, '21:00'], [1052, '30']].forEach(function (t) {
    add(plot, 'text', { x: t[0], y: 495, class: 'axis-text' }, t[1]);
});

// Price scale
[[321, '1,15250'], [409, '1,15150'], [452, '1,15100']].forEach(function (p) {
    add(scale, 'text', { x: 8, y: p[0] + 4, class: 'price-text' }, p[1]);
});
const tags = [
    [6, '1,15512', 'up'], [23, '1,15510', 'up'], [40, '1,15460', 'dark'], [57, '1,15460', 'up'],
    [74, '1,15432', 'dark'], [91, '1,15406', 'flat'], [108, '1,15395', 'flat'], [125, '1,15383', 'up'],
    [142, '1,15377', 'up'], [159, '1,15362', 'flat'], [176, '1,15360', 'flat'], [193, '1,15346', 'down'],
    [210, '1,15331', 'flat'], [227, '1,15327', 'flat'], [244, '1,15321', 'up'], [261, '1,15306', 'dark'],
    [278, '1,15288', 'down'], [295, '1,15280', 'down'], [330, '1,15240', 'down'], [347, '1,15224', 'flat'],
    [364, '1,15224', 'down'], [401, '1,15160', 'up']
];
const tagColors = { up: '#12a97c', dark: '#a8133a', flat: '#808080', down: '#e91e4c' };
add(scale, 'rect', { x: 0, y: 303, width: 56, height: 15, fill: tagColors.down });
tags.forEach(function (t) {
    add(scale, 'rect', { x: 0, y: t[0] - 9, width: 56, height: 17, fill: tagColors[t[2]] });
    add(scale, 'text', { x: 8, y: t[0] + 4, class: 'price-tag' }, t[1]);
});
add(scale, 'text', { x: 8, y: 313, class: 'countdown' }, '05:22');
add(scale, 'path', { d: 'M27 485h8l3.5 6-3.5 6h-8l-3.5-6z', fill: 'none', stroke: '#111' });
add(scale, 'circle', { cx: 31, cy: 491, r: 2, fill: 'none', stroke: '#111' });
```
